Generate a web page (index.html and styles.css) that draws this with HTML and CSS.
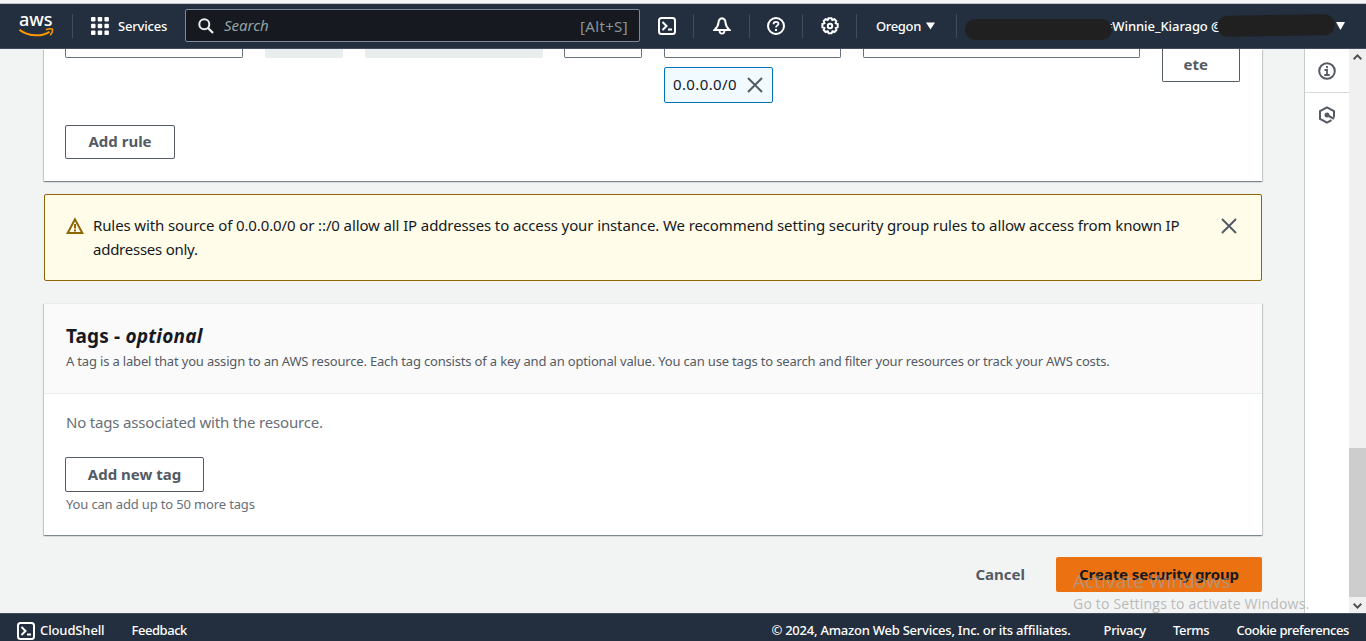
FILE: index.html
```html
<!DOCTYPE html>
<html lang="en">
<head>
<meta charset="utf-8">
<title>Create security group</title>
<link rel="stylesheet" href="styles.css">
</head>
<body>
<div class="page">
  <div class="window-edge"></div>
  <header class="topbar">
    <div class="logo">
      <span class="logo-text">aws</span>
      <svg class="logo-smile" width="36" height="11" viewBox="0 0 36 11"><path d="M.5 1.800C9 8.200 22 9.200 30.500 3.800" fill="none" stroke="#f90" stroke-width="2"/><path d="M27 1.800C29.500 .7 32 .6 33.500 1.300C33.800 3 32.800 5.500 31.200 7.200" fill="none" stroke="#f90" stroke-width="1.500"/></svg>
    </div>
    <div class="services">
      <svg width="18" height="18" viewBox="0 0 18 18" fill="#fff"><rect width="4.500" height="4.500" rx="1"/><rect x="6.700" width="4.500" height="4.500" rx="1"/><rect x="13.400" width="4.500" height="4.500" rx="1"/><rect y="6.700" width="4.500" height="4.500" rx="1"/><rect x="6.700" y="6.700" width="4.500" height="4.500" rx="1"/><rect x="13.400" y="6.700" width="4.500" height="4.500" rx="1"/><rect y="13.400" width="4.500" height="4.500" rx="1"/><rect x="6.700" y="13.400" width="4.500" height="4.500" rx="1"/><rect x="13.400" y="13.400" width="4.500" height="4.500" rx="1"/></svg>
      <span class="t-services">Services</span>
    </div>
    <div class="search">
      <svg width="16" height="16" viewBox="0 0 16 16" fill="none" stroke="#eaeded" stroke-width="2"><circle cx="6.300" cy="6.300" r="5"/><path d="M10 10l5 5" stroke-width="2.300"/></svg>
      <span class="t-search">Search</span>
      <span class="t-key">[Alt+S]</span>
    </div>
    <div class="cell cell-shell"><svg width="18" height="18" viewBox="0 0 18 18" fill="none" stroke="#fff" stroke-width="2"><rect x="1" y="1" width="16" height="16" rx="2.500"/><path d="M4.500 5l4 4-4 4M10 12.500h4"/></svg></div>
    <div class="cell cell-bell"><svg width="18" height="18" viewBox="0 0 18 18" fill="none" stroke="#fff" stroke-width="2"><path d="M9 1.300C6.700 1.500 5.700 3.200 5.500 5.500C5.300 8.500 4.200 10.500 1.500 13H16.500C13.800 10.500 12.700 8.500 12.500 5.500C12.300 3.200 11.300 1.500 9 1.300Z"/><path d="M6.500 13.500a2.500 3.200 0 0 0 5 0" stroke-width="1.800"/></svg></div>
    <div class="cell cell-help"><svg width="18" height="18" viewBox="0 0 18 18" fill="none" stroke="#fff" stroke-width="2"><circle cx="9" cy="9" r="8"/><path d="M6.500 7.300C6.500 5.700 7.500 4.900 9 4.900S11.500 5.800 11.500 7S9 8.400 9 10.500" stroke-width="1.700"/><path d="M9 12v2"/></svg></div>
    <div class="cell cell-gear"><svg width="18" height="18" viewBox="0 0 18 18" fill="none" stroke="#fff" stroke-width="2"><path d="M7.500 1.200h3l.8 1.700 2.100-.7 1.900 1.900-.6 2 2 .9v3.200l-1.900.8.700 2-2 2-2-.7-.9 1.900h-3l-.9-1.900-2.100.7-1.900-2 .7-2-2-.8V7l2-.9-.7-2 1.900-1.900 2.100.7z" stroke-width="2"/><circle cx="9" cy="9" r="2.200"/></svg></div>
    <div class="cell cell-region"><span class="t-region">Oregon</span><svg width="9" height="8" viewBox="0 0 10 8"><path d="M0 0h10L5 8z" fill="#fff"/></svg></div>
    <div class="account">
      <span class="mask"></span>
      <span class="t-account">=Winnie_Kiarago @</span>
      <span class="mask mask-end"></span>
      <svg width="9" height="8" viewBox="0 0 9 8"><path d="M0 0h9L4.500 8z" fill="#fff"/></svg>
    </div>
  </header>

  <div class="body">
    <main class="content">
      <section class="card rules">
        <div class="fields">
          <div class="field"></div>
          <div class="field off"></div>
          <div class="field off"></div>
          <div class="field"></div>
          <div class="field"></div>
          <div class="field"></div>
          <button class="btn delete"><span class="t-ete">ete</span></button>
        </div>
        <div class="token"><span class="t-token">0.0.0.0/0</span><svg width="16" height="16" viewBox="0 0 16 16" stroke="#545b64" stroke-width="2"><path d="M1 1l14 14M15 1L1 15"/></svg></div>
        <button class="btn add-rule"><span class="t-rule">Add rule</span></button>
      </section>

      <section class="alert">
        <svg class="warn" width="18" height="18" viewBox="0 0 18 18" fill="none" stroke="#8d6605" stroke-width="2"><path d="M9 2.300L1.700 16h14.600z"/><path d="M9 7v4.500M9 12.500v2"/></svg>
        <p class="alert-text"><span class="t-alert1">Rules with source of 0.0.0.0/0 or ::/0 allow all IP addresses to access your instance. We recommend setting security group rules to allow access from known IP</span><br><span class="t-alert2">addresses only.</span></p>
        <svg class="close" width="16" height="16" viewBox="0 0 16 16" stroke="#545b64" stroke-width="2"><path d="M1 1l14 14M15 1L1 15"/></svg>
      </section>

      <section class="card tags">
        <div class="tags-head">
          <h2><span class="t-tags">Tags - </span><em class="t-opt">optional</em></h2>
          <p><span class="t-desc">A tag is a label that you assign to an AWS resource. Each tag consists of a key and an optional value. You can use tags to search and filter your resources or track your AWS costs.</span></p>
        </div>
        <div class="tags-body">
          <p class="empty"><span class="t-empty">No tags associated with the resource.</span></p>
          <button class="btn add-tag"><span class="t-tag">Add new tag</span></button>
          <p class="hint"><span class="t-hint">You can add up to 50 more tags</span></p>
        </div>
      </section>

      <div class="actions">
        <button class="cancel"><span class="t-cancel">Cancel</span></button>
        <button class="primary"><span class="t-create">Create security group</span></button>
      </div>
    </main>

    <aside class="tools">
      <div class="tool"><svg width="18" height="18" viewBox="0 0 18 18" fill="none" stroke="#545b64" stroke-width="2"><circle cx="9" cy="9" r="7.800"/><path d="M6.500 8H9v5M6.300 13h5.400M9 4v2.200" stroke-width="1.800"/></svg></div>
      <div class="tool last"><svg width="18" height="18" viewBox="0 0 18 18" fill="none" stroke="#545b64" stroke-width="2"><path d="M16 11.500V5.200L9 1.300 2 5.200v7.600L9 16.700l4.500-2.500"/><circle cx="9" cy="9" r="2.500" fill="#545b64" stroke="none"/><path d="M9 9l7 3.800"/></svg></div>
    </aside>

    <div class="scrollbar">
      <svg class="arrow" width="9" height="6" viewBox="0 0 9 6" fill="none" stroke="#505050" stroke-width="2"><path d="M.7 5.200L4.500 1.400l3.800 3.800"/></svg>
      <div class="thumb"></div>
      <svg class="arrow" width="9" height="6" viewBox="0 0 9 6" fill="none" stroke="#505050" stroke-width="2"><path d="M.7 .8l3.800 3.800L8.300 .8"/></svg>
    </div>
  </div>

  <footer class="footer">
    <svg width="18" height="18" viewBox="0 0 18 18" fill="none" stroke="#fff" stroke-width="2"><rect x="1" y="1" width="16" height="16" rx="2.500"/><path d="M4.500 5l4 4-4 4M10 12.500h4"/></svg>
    <span class="t-cs">CloudShell</span>
    <span class="t-fb">Feedback</span>
    <span class="t-copy">© 2024, Amazon Web Services, Inc. or its affiliates.</span>
    <span class="t-priv">Privacy</span>
    <span class="t-terms">Terms</span>
    <span class="t-cookie">Cookie preferences</span>
  </footer>

  <div class="watermark">
    <div><span class="t-wm1">Activate Windows</span></div>
    <div class="wm-line"><span class="t-wm2">Go to Settings to activate Windows.</span></div>
  </div>
</div>
</body>
</html>
```
FILE: styles.css
```css
* { box-sizing: border-box; }
body { margin: 0; font-family: "Noto Sans", "Open Sans", sans-serif; color: #16191f; }
p, h2 { margin: 0; }
svg { display: block; flex: none; }
span, em { white-space: pre; }
button { font-family: inherit; padding: 0; margin: 0; }
.page { position: relative; width: 1366px; height: 641px; overflow: hidden; display: flex; flex-direction: column; background: #f2f3f3; }
.window-edge { height: 4px; flex: none; background: #f4f5f6; border-bottom: 1px solid #c4c6c9; }

.topbar { height: 45px; flex: none; display: flex; align-items: center; background: #232f3e; border-bottom: 1px solid #414d5c; color: #fff; font-size: 13px; font-weight: 500; }
.logo { width: 73px; height: 24px; margin-top: -1px; border-right: 1px solid #414d5c; padding-left: 19px; display: flex; flex-direction: column; }
.logo-text { font-size: 18px; font-weight: 500; line-height: 18px; height: 15px; margin-top: -4px; }
.logo-smile { margin-top: 3px; }
.services { width: 112px; padding-left: 18px; display: flex; align-items: center; gap: 9px; }
.t-services { letter-spacing: -.2px; margin-top: -1px; }
.search { width: 455px; height: 33px; margin-top: -1px; border: 1px solid #7d8998; border-radius: 2px; background: #16191f; display: flex; align-items: center; padding: 0 11px 0 12px; font-size: 15px; font-weight: 400; }
.t-search { font-style: italic; color: #95a5a6; margin-left: 10px; margin-top: -1px; }
.t-key { color: #879596; margin-left: auto; letter-spacing: .35px; }
.cell { height: 24px; display: flex; align-items: center; justify-content: center; border-right: 1px solid #414d5c; }
.cell-shell { width: 54px; }
.cell-bell { width: 56px; }
.cell-help { width: 53px; }
.cell-gear { width: 54px; }
.cell-region { width: 100px; justify-content: flex-start; padding-left: 19px; gap: 5px; }
.t-region { letter-spacing: -.35px; }
.cell-region svg { margin-top: -1px; }
.account { width: 409px; display: flex; align-items: center; padding-left: 8px; }
.t-account { margin-left: -7px; letter-spacing: -.08px; }
.mask { width: 147px; height: 21px; border-radius: 11px; background: #202020; position: relative; z-index: 1; top: 3px; flex: none; }
.mask-end { width: 118px; top: -1px; margin-left: -6px; transform: rotate(-.8deg); }
.account svg { margin-left: 1px; }

.body { height: 564px; display: flex; }
.content { width: 1305px; padding-left: 44px; border-right: 1px solid #c5cccc; background: #f2f3f3; }
.card { width: 1218px; background: #fff; box-shadow: 0 1px 1px 0 rgba(0,28,36,.3), 1px 1px 1px 0 rgba(0,28,36,.15), -1px 1px 1px 0 rgba(0,28,36,.15); }
.rules { height: 132px; padding: 0 21px; }
.fields { height: 34px; display: grid; grid-template-columns: 178px 78px 178px 78px 177px 277px 78px; column-gap: 21.8px; align-items: start; }
.field { height: 9px; border: 1px solid #687078; border-top: 0; border-radius: 0 0 2px 2px; background: #fff; }
.off { background: #eaeded; border: 0; }
.btn { background: #fff; border: 1px solid #545b64; border-radius: 2px; color: #545b64; font-size: 15px; font-weight: 700; height: 34px; display: flex; align-items: center; justify-content: center; padding-bottom: 2px; }
.delete { height: 33px; border-top: 0; border-radius: 0 0 2px 2px; padding-right: 10px; }
.token { width: 109px; height: 36px; margin: -16px 0 0 599px; border: 1px solid #0073bb; border-radius: 2px; background: #f1faff; display: flex; align-items: center; justify-content: space-between; padding: 0 9px 0 8px; font-size: 15px; }
.t-token { letter-spacing: .38px; margin-top: -2px; }
.add-rule { width: 110px; margin-top: 22px; }
.alert { width: 1218px; height: 87px; margin-top: 13px; background: #fffce9; border: 1px solid #8d6605; border-radius: 2px; display: flex; padding: 18px 24px 0 21px; font-size: 15px; line-height: 24px; }
.warn { margin-top: 4px; }
.alert-text { margin-left: 9px; flex: 1; }
.t-alert1 { letter-spacing: -.115px; }
.t-alert2 { letter-spacing: -.25px; }
.close { margin-top: 5px; }
.tags { height: 232px; margin-top: 22px; border-top: 1px solid #eaeded; }
.tags-head { height: 90px; background: #fafafa; border-bottom: 1px solid #eaeded; padding: 19px 21px 0 22px; }
.tags-head h2 { font-size: 19px; line-height: 26px; font-weight: 700; }
.t-tags { letter-spacing: .15px; }
.t-opt { letter-spacing: .22px; }
.tags-head p { font-size: 13px; line-height: 24px; color: #545b64; }
.t-desc { letter-spacing: -.172px; }
.tags-body { padding: 16px 21px 0; color: #687078; }
.empty { font-size: 15px; line-height: 24px; }
.t-empty { letter-spacing: -.18px; }
.add-tag { width: 139px; height: 35px; margin-top: 23px; }
.hint { font-size: 13px; line-height: 24px; }
.empty, .hint { padding-left: 1px; }
.t-hint { letter-spacing: -.15px; }
.actions { width: 1218px; height: 35px; margin-top: 22px; display: flex; justify-content: flex-end; gap: 31px; }
.cancel, .primary { border: 0; background: none; color: #545b64; font-size: 15px; font-weight: 700; padding-bottom: 2px; }
.primary { width: 206px; background: #ec7211; color: #16191f; border-radius: 2px; }
.t-create { letter-spacing: -.1px; }
.tools { width: 44px; background: #fff; }
.tool { height: 44px; border-bottom: 1px solid #d5dbdb; display: flex; align-items: center; justify-content: center; }
.last { border: 0; }
.scrollbar { width: 17px; background: #f0f0f0; display: flex; flex-direction: column; align-items: center; padding: 5px 0 4px; }
.thumb { width: 17px; height: 149px; background: #cdcdcd; margin: auto 0 6px; }

.footer { height: 28px; background: #232f3e; border-top: 1px solid #414d5c; color: #fff; display: flex; align-items: center; padding: 7px 17px 0 17px; font-size: 13px; line-height: 18px; font-weight: 500; }
.footer span { margin-top: -2px; }
.footer .t-cs { margin-left: 5px; letter-spacing: -.12px; }
.t-fb { margin-left: 27px; letter-spacing: -.45px; }
.t-copy { margin-left: auto; letter-spacing: -.235px; }
.t-priv { margin-left: 33px; letter-spacing: -.3px; }
.t-terms { margin-left: 27px; letter-spacing: -.3px; }
.t-cookie { margin-left: 27px; letter-spacing: -.39px; }

/* Activation notice overlaid on the desktop */
.watermark { position: absolute; left: 1073px; top: 569px; color: rgba(160,160,160,.7); font-family: "Open Sans", sans-serif; }
.t-wm1 { font-size: 19px; line-height: 25px; letter-spacing: .1px; }
.t-wm2 { font-size: 14px; line-height: 20px; letter-spacing: .2px; }
.wm-line { margin-top: -2px; }
```
